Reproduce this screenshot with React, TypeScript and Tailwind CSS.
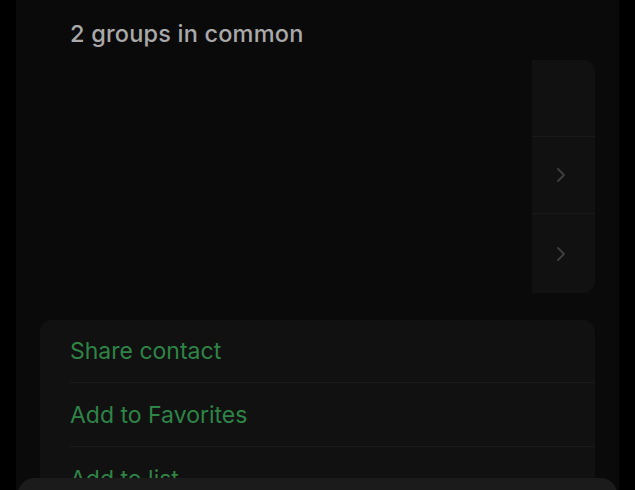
import { ChevronRight } from "lucide-react";

const font = { fontFamily: "Inter, 'Noto Sans', sans-serif" };

function GroupsCard() {
  return (
    <div className="mt-[10px] flex h-[233px] pr-[24px]">
      <div className="flex-1" />
      <div className="flex w-[63px] flex-col rounded-r-[12px] bg-[#101110]">
        <div className="h-[77px] border-b border-[#181918]" />
        <div className="flex h-[77px] items-center border-b border-[#181918] pl-[17px]">
          <ChevronRight className="h-[24px] w-[24px] text-[#3e3f3e]" strokeWidth={1.8} />
        </div>
        <div className="flex flex-1 items-center pl-[17px]">
          <ChevronRight className="h-[24px] w-[24px] text-[#3e3f3e]" strokeWidth={1.8} />
        </div>
      </div>
    </div>
  );
}

function ActionsCard() {
  return (
    <div className="mx-[24px] mt-[27px] rounded-[12px] bg-[#101110] pl-[30px] text-[23px] text-[#2f8447]">
      <div className="flex h-[63px] items-center border-b border-[#1a1b1a]">Share contact</div>
      <div className="flex h-[64px] items-center border-b border-[#1a1b1a] pt-[1px]">Add to Favorites</div>
      <div className="flex h-[64px] items-center">Add to list</div>
    </div>
  );
}

export default function App() {
  return (
    <div className="relative h-[490px] w-[635px] overflow-hidden bg-black" style={font}>
      <div className="mx-[16px] h-full bg-[#0a0a0a]">
        <div className="pl-[54px] pt-[18px] text-[23.5px] font-medium leading-[32px] tracking-[0.2px] text-[#a9a9a9]">
          2 groups in common
        </div>
        <GroupsCard />
        <ActionsCard />
      </div>
      <div className="absolute left-[18px] right-[18px] top-[478px] h-[40px] rounded-t-[16px] bg-[#1b1b1b]" />
    </div>
  );
}
